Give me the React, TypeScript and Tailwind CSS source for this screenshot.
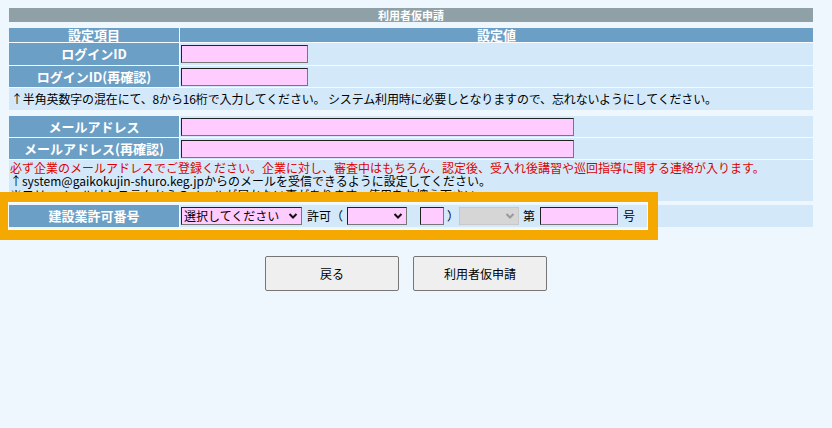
import React from "react";

const label =
  "flex items-center justify-center bg-[#6b9fc6] text-[13px] font-bold text-white";
const value = "flex items-center bg-[#d3e9f9] pl-px";
const pinkInput =
  "h-[18px] border border-t-[#222] border-l-[#222] border-b-[#777] border-r-[#777] bg-[#ffccff] outline-none";

function Chevron({ color = "#111" }: { color?: string }) {
  return (
    <svg width="10" height="8" viewBox="0 0 10 8" className="pointer-events-none absolute right-[4px] top-[5px]">
      <path d="M1.5 2 L5 5.5 L8.5 2" fill="none" stroke={color} strokeWidth="2" />
    </svg>
  );
}

function Select({
  width,
  text,
  disabled,
}: {
  width: string;
  text?: string;
  disabled?: boolean;
}) {
  return (
    <span className={"relative inline-block " + width}>
      <select
        disabled={disabled}
        className={
          "h-[18px] w-full appearance-none border pl-[2px] text-[12px] leading-[16px] outline-none " +
          (disabled
            ? "border-[#c8c8c8] bg-[#d6d6d6] text-[#666]"
            : "border-t-[#222] border-l-[#222] border-b-[#777] border-r-[#777] bg-[#ffccff] text-black")
        }
      >
        <option>{text ?? ""}</option>
      </select>
      <Chevron color={disabled ? "#9a9a9a" : "#111"} />
    </span>
  );
}

export default function App() {
  return (
    <div className="relative min-h-[428px] w-full bg-[#eef7fe] font-['Noto_Sans_CJK_JP',sans-serif] text-[12px] text-black">
      <div className="pl-[9px] pr-[19px] pt-[8px]">
        {/* タイトル */}
        <div className="h-[14px] bg-[#8fa1a6] text-center text-[11px] font-bold leading-[14px] text-white">
          利用者仮申請
        </div>

        {/* ログインID */}
        <div className="mt-[6px] grid grid-cols-[170px_1fr] gap-px bg-[#f7fbff]">
          <div className={label + " h-[14px] leading-[14px]"}>設定項目</div>
          <div className="flex h-[14px] items-center justify-center bg-[#6b9fc6] text-[13px] font-bold leading-[14px] text-white">
            設定値
          </div>

          <div className={label + " h-[22px]"}>ログインID</div>
          <div className={value}>
            <input className={pinkInput + " w-[127px]"} />
          </div>

          <div className={label + " h-[21px]"}>ログインID(再確認)</div>
          <div className={value}>
            <input className={pinkInput + " w-[127px]"} />
          </div>

          <div className="col-span-2 flex h-[22px] items-center bg-[#d3e9f9] pl-[2px] tracking-[-0.15px]">
            ↑半角英数字の混在にて、8から16桁で入力してください。 システム利用時に必要しとなりますので、忘れないようにしてください。
          </div>
        </div>

        {/* メールアドレス */}
        <div className="mt-[6px] grid grid-cols-[170px_1fr] gap-px bg-[#f7fbff]">
          <div className={label + " h-[21px]"}>メールアドレス</div>
          <div className={value}>
            <input className={pinkInput + " h-[17px] w-[393px]"} />
          </div>

          <div className={label + " h-[21px]"}>メールアドレス(再確認)</div>
          <div className={value}>
            <input className={pinkInput + " h-[17px] w-[393px]"} />
          </div>

          <div className="col-span-2 h-[41px] bg-[#d3e9f9] pl-px pt-[1px] leading-[13.3px]">
            <div className="text-[#dd0000]">
              必ず企業のメールアドレスでご登録ください。企業に対し、審査中はもちろん、認定後、受入れ後講習や巡回指導に関する連絡が入ります。
            </div>
            <div>↑system@gaikokujin-shuro.keg.jpからのメールを受信できるように設定してください。</div>
            <div>※フリーメールはシステムからのメールが届かない事があります。使用をお控え下さい。</div>
          </div>
        </div>

        {/* 建設業許可番号 */}
        <div className="mt-[4px] grid grid-cols-[170px_1fr] gap-px bg-[#f7fbff]">
          <div className={label + " h-[22px]"}>建設業許可番号</div>
          <div className={value}>
            <Select width="w-[121px]" text="選択してください" />
            <span className="ml-[5px] mr-[4px]">許可（</span>
            <Select width="w-[60px]" />
            <input className={pinkInput + " ml-[13px] w-[24px]"} />
            <span className="ml-[3px]">）</span>
            <Select width="w-[60px]" disabled />
            <span className="ml-[4px]">第</span>
            <input className={pinkInput + " ml-[5px] w-[78px]"} />
            <span className="ml-[5px]">号</span>
          </div>
        </div>

        {/* ボタン */}
        <div className="mt-[29px] flex justify-center gap-[14px] pr-[10px]">
          <button className="h-[35px] w-[134px] rounded-[2px] border border-[#767676] bg-[#efefef] text-[12px]">
            戻る
          </button>
          <button className="h-[35px] w-[134px] rounded-[2px] border border-[#767676] bg-[#efefef] text-[12px]">
            利用者仮申請
          </button>
        </div>
      </div>

      {/* ハイライト枠 */}
      <div className="pointer-events-none absolute left-[-2px] top-[192px] h-[48px] w-[660px] border-[10px] border-[#f5a800] shadow-[inset_0_0_0_1px_rgba(255,255,255,0.7)]" />
    </div>
  );
}
